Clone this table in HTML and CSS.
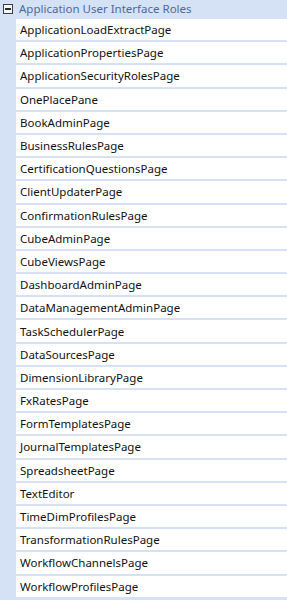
FILE: index.html
```html
<!DOCTYPE html>
<html>
<head>
<meta charset="utf-8">
<link rel="stylesheet" href="styles.css">
</head>
<body>
<div class="tree">
  <div class="header">
    <svg class="toggle" width="10" height="10" viewBox="0 0 10 10"><rect x="0.5" y="0.5" width="9" height="9" fill="#f4f6fa" stroke="#3c3c3c"/><rect x="2" y="4" width="6" height="2" fill="#2a2a2a"/></svg>
    <span class="title">Application User Interface Roles</span>
  </div>
  <div class="body">
    <div class="gutter"></div>
    <ul class="items">
      <li>ApplicationLoadExtractPage</li>
      <li>ApplicationPropertiesPage</li>
      <li>ApplicationSecurityRolesPage</li>
      <li>OnePlacePane</li>
      <li>BookAdminPage</li>
      <li>BusinessRulesPage</li>
      <li>CertificationQuestionsPage</li>
      <li>ClientUpdaterPage</li>
      <li>ConfirmationRulesPage</li>
      <li>CubeAdminPage</li>
      <li>CubeViewsPage</li>
      <li>DashboardAdminPage</li>
      <li>DataManagementAdminPage</li>
      <li>TaskSchedulerPage</li>
      <li>DataSourcesPage</li>
      <li>DimensionLibraryPage</li>
      <li>FxRatesPage</li>
      <li>FormTemplatesPage</li>
      <li>JournalTemplatesPage</li>
      <li>SpreadsheetPage</li>
      <li>TextEditor</li>
      <li>TimeDimProfilesPage</li>
      <li>TransformationRulesPage</li>
      <li>WorkflowChannelsPage</li>
      <li>WorkflowProfilesPage</li>
    </ul>
  </div>
</div>
</body>
</html>
```
FILE: styles.css
```css
html, body { margin: 0; padding: 0; background: #fff; }
body { font-family: "Noto Sans", "Open Sans", sans-serif; font-size: 11.5px; color: #111; overflow: hidden; }
.tree { width: 287px; height: 600px; background: #d5e1f5; }
.header { height: 18px; display: flex; align-items: center; padding-left: 3px; box-sizing: border-box; }
.toggle { flex: none; display: block; }
.title { margin-left: 6px; color: #4b6a9a; font-size: 11.5px; line-height: 16px; }
.body { display: flex; }
.gutter { width: 16px; flex: none; }
.items { list-style: none; margin: 0; padding: 0; flex: 1; }
.items li { height: 21.2px; margin-top: 2px; background: #fff; padding-left: 4px; display: flex; align-items: center; white-space: nowrap; }
.items li:first-child { margin-top: 1px; }
```
